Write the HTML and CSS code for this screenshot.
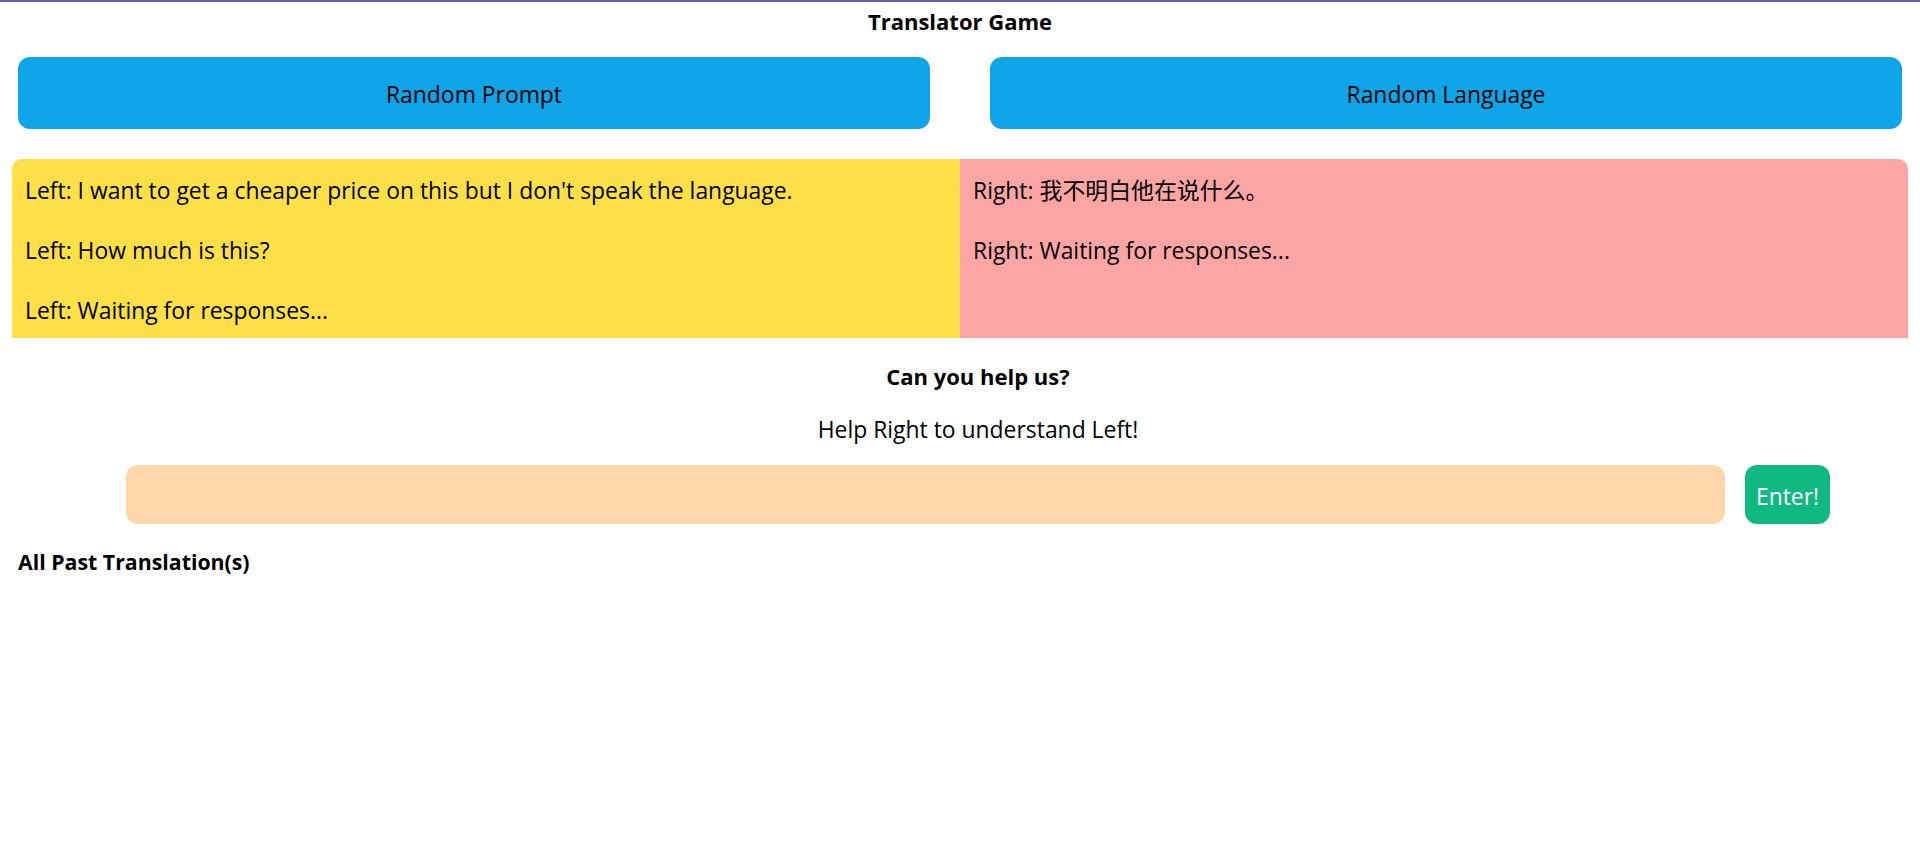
FILE: index.html
```html
<!DOCTYPE html>
<html lang="en">
<head>
<meta charset="utf-8">
<title>Translator Game</title>
<link rel="stylesheet" href="styles.css">
</head>
<body>
<div class="topbar"></div>
<h1 class="title">Translator Game</h1>
<div class="actions">
  <button class="action-btn" type="button">Random Prompt</button>
  <button class="action-btn" type="button">Random Language</button>
</div>
<div class="chat">
  <div class="side side-left">
    <p class="line">Left: I want to get a cheaper price on this but I don't speak the language.</p>
    <p class="line">Left: How much is this?</p>
    <p class="line">Left: Waiting for responses...</p>
  </div>
  <div class="side side-right">
    <p class="line">Right: 我不明白他在说什么。</p>
    <p class="line">Right: Waiting for responses...</p>
  </div>
</div>
<section class="help">
  <h2 class="help-title">Can you help us?</h2>
  <p class="help-text">Help Right to understand Left!</p>
  <form class="answer" onsubmit="return false;">
    <input class="answer-input" type="text" aria-label="Translation">
    <button class="answer-btn" type="submit">Enter!</button>
  </form>
</section>
<h3 class="past">All Past Translation(s)</h3>
</body>
</html>
```
FILE: styles.css
```css
html, body {
  margin: 0;
  padding: 0;
  background: #ffffff;
}
body {
  font-family: "Open Sans", "Noto Sans CJK SC", sans-serif;
  font-size: 22.9px;
  line-height: 30px;
  color: #000000;
}
.topbar {
  height: 2px;
  background: #7059b5;
}
.title {
  margin: 4px 0 0;
  font-size: 22px;
  line-height: 30px;
  font-weight: 700;
  text-align: center;
}
.actions {
  display: flex;
  gap: 60px;
  margin-top: 21px;
  padding: 0 18px;
}
.action-btn {
  flex: 1;
  height: 72px;
  border: none;
  border-radius: 12px;
  background: #0ea5e9;
  color: #000000;
  font-family: inherit;
  font-size: 22.9px;
  line-height: 30px;
  padding: 4px 0 0;
}
.chat {
  display: flex;
  margin: 30px 12px 0;
}
.side {
  flex: 1;
  display: flex;
  flex-direction: column;
  gap: 30px;
  padding: 17px 13px 12px;
}
.side-left {
  background: #fde047;
  border-radius: 10px 0 0 0;
}
.side-right {
  background: #fca5a5;
  border-radius: 0 10px 0 0;
}
.line {
  margin: 0;
}
.help {
  margin-top: 23px;
  padding-left: 36px;
  text-align: center;
}
.help-title {
  margin: 0;
  font-size: 22px;
  line-height: 30px;
  font-weight: 700;
}
.help-text {
  margin: 24px 0 0;
}
.answer {
  display: flex;
  gap: 20px;
  width: 1704px;
  margin: 20px auto 0;
}
.answer-input {
  flex: 1;
  height: 59px;
  box-sizing: border-box;
  border: none;
  border-radius: 12px;
  background: #fed7aa;
  font-family: inherit;
  font-size: 22.9px;
  padding: 0 12px;
}
.answer-btn {
  width: 85px;
  height: 59px;
  border: none;
  border-radius: 12px;
  background: #10b981;
  color: #ffffff;
  font-family: inherit;
  font-size: 22.9px;
  padding: 4px 0 0;
}
.past {
  margin: 23px 0 0 18px;
  font-size: 21.3px;
  line-height: 30px;
  font-weight: 700;
}
```
